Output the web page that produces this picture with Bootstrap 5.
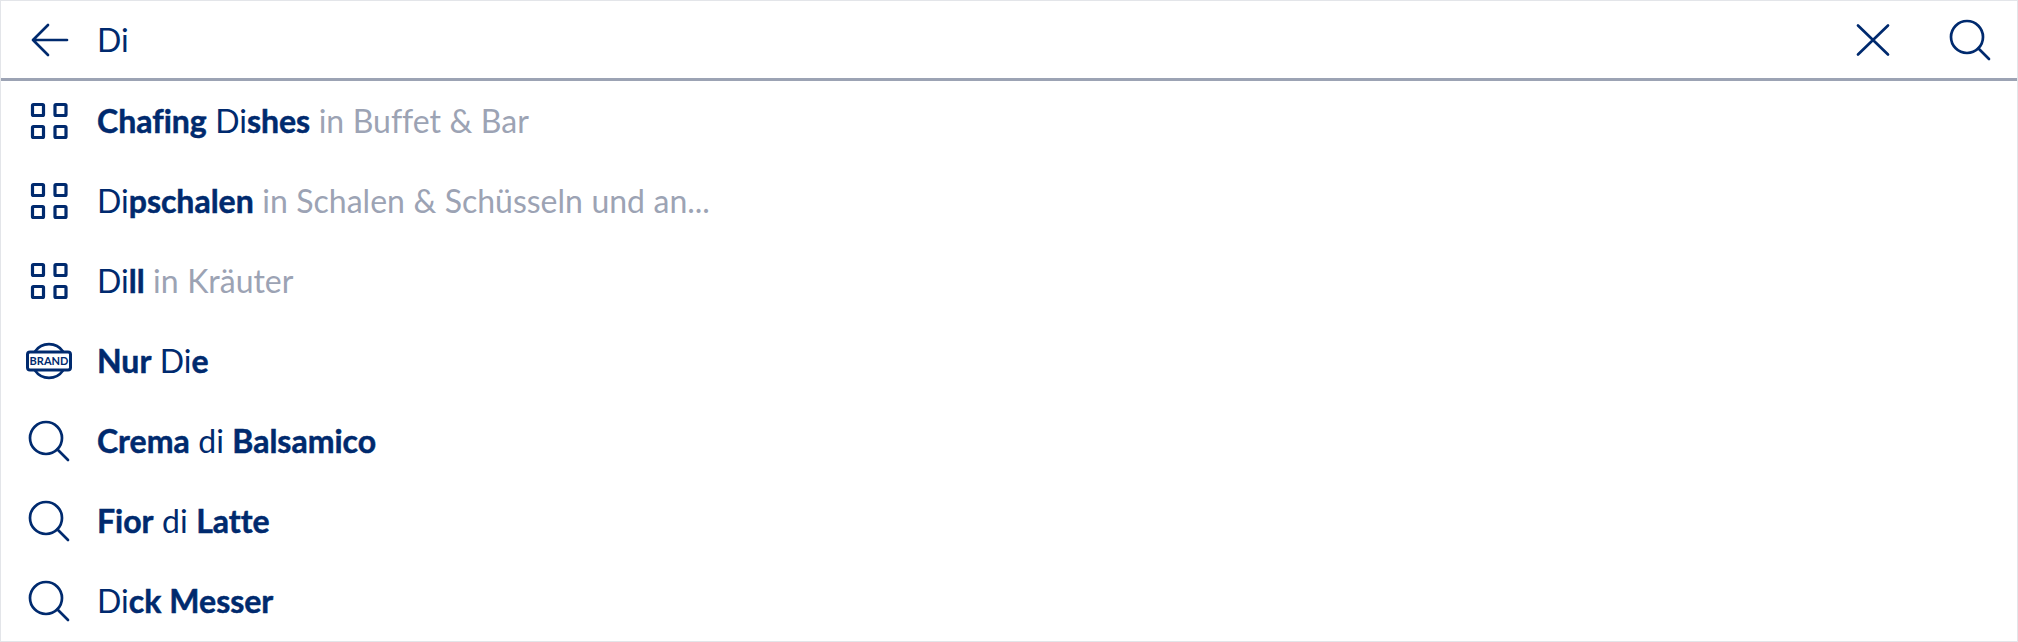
<!DOCTYPE html>
<html lang="de">
<head>
  <meta charset="UTF-8">
  <title>Suche</title>
  <link href="https://cdn.jsdelivr.net/npm/bootstrap@5.3.0/dist/css/bootstrap.min.css" rel="stylesheet">
  <style>
    html, body { height: 642px; overflow: hidden; background: #fff; }
    body { font-family: Lato, "Liberation Sans", sans-serif; color: #002a6e; }
    .search-shell { height: 642px; border: 1px solid #e3e5e9; }
    .search-bar { height: 80px; border-bottom: 3px solid #9ca3b4; padding: 0 23px 0 24px; }
    .search-term { font-size: 32px; margin-left: 24px; }
    .hit-row { height: 80px; padding-left: 24px; font-size: 32px; }
    .hit-row b { font-weight: 700; -webkit-text-stroke: .5px #002a6e; }
    .hit-text { margin-left: 24px; white-space: nowrap; font-variant-ligatures: none; word-spacing: .3px; }
    .hit-cat { color: #9ca3b4; }
    .ico { flex: none; display: block; width: 48px; height: 48px; fill: none; stroke: #002a6e; stroke-width: 2.7; stroke-linecap: round; stroke-linejoin: round; }
    .ico-end { margin-left: 49px; }
    .brand-word { font-family: Lato, "Liberation Sans", sans-serif; font-size: 11px; font-weight: 700; fill: #002a6e; stroke: none; }
  </style>
</head>
<body>
  <svg class="d-none">
    <symbol id="i-search" viewBox="0 0 48 48"><circle cx="21" cy="21" r="16"/><path d="M32.5 32.5 43 43"/></symbol>
    <symbol id="i-grid" viewBox="0 0 48 48"><g stroke-width="3.200"><rect x="7.500" y="7.500" width="11" height="11" rx="1"/><rect x="30" y="7.500" width="11" height="11" rx="1"/><rect x="7.500" y="29.500" width="11" height="11" rx="1"/><rect x="30" y="29.500" width="11" height="11" rx="1"/></g></symbol>
  </svg>
  <div class="search-shell">
    <div class="search-bar d-flex align-items-center">
      <svg class="ico" viewBox="0 0 48 48"><path d="M42 24H8M23 9 8 24l15 15"/></svg>
      <span class="search-term">Di</span>
      <svg class="ico ms-auto" viewBox="0 0 48 48"><path d="M9 9.500l30 29M39 9.500 9 38.500"/></svg>
      <svg class="ico ico-end"><use href="#i-search"/></svg>
    </div>
    <div class="hit-row d-flex align-items-center">
      <svg class="ico"><use href="#i-grid"/></svg>
      <span class="hit-text"><b>Chafing</b> Di<b>shes</b> <span class="hit-cat">in Buffet &amp; Bar</span></span>
    </div>
    <div class="hit-row d-flex align-items-center">
      <svg class="ico"><use href="#i-grid"/></svg>
      <span class="hit-text">Di<b>pschalen</b> <span class="hit-cat">in Schalen &amp; Schüsseln und an...</span></span>
    </div>
    <div class="hit-row d-flex align-items-center">
      <svg class="ico"><use href="#i-grid"/></svg>
      <span class="hit-text">Di<b>ll</b> <span class="hit-cat">in Kräuter</span></span>
    </div>
    <div class="hit-row d-flex align-items-center">
      <svg class="ico" viewBox="0 0 48 48">
        <path stroke-width="2.600" d="M10 14.500a17 17 0 0 1 28 0M10 33.500a17 17 0 0 0 28 0"/>
        <rect x="2.500" y="15" width="43" height="18" rx="2.500" stroke-width="3"/>
        <text class="brand-word" x="24" y="28" text-anchor="middle">BRAND</text>
      </svg>
      <span class="hit-text"><b>Nur</b> Di<b>e</b></span>
    </div>
    <div class="hit-row d-flex align-items-center">
      <svg class="ico"><use href="#i-search"/></svg>
      <span class="hit-text"><b>Crema</b> di <b>Balsamico</b></span>
    </div>
    <div class="hit-row d-flex align-items-center">
      <svg class="ico"><use href="#i-search"/></svg>
      <span class="hit-text"><b>Fior</b> di <b>Latte</b></span>
    </div>
    <div class="hit-row d-flex align-items-center">
      <svg class="ico"><use href="#i-search"/></svg>
      <span class="hit-text">Di<b>ck Messer</b></span>
    </div>
  </div>
  <script src="https://cdn.jsdelivr.net/npm/bootstrap@5.3.0/dist/js/bootstrap.bundle.min.js"></script>
</body>
</html>
